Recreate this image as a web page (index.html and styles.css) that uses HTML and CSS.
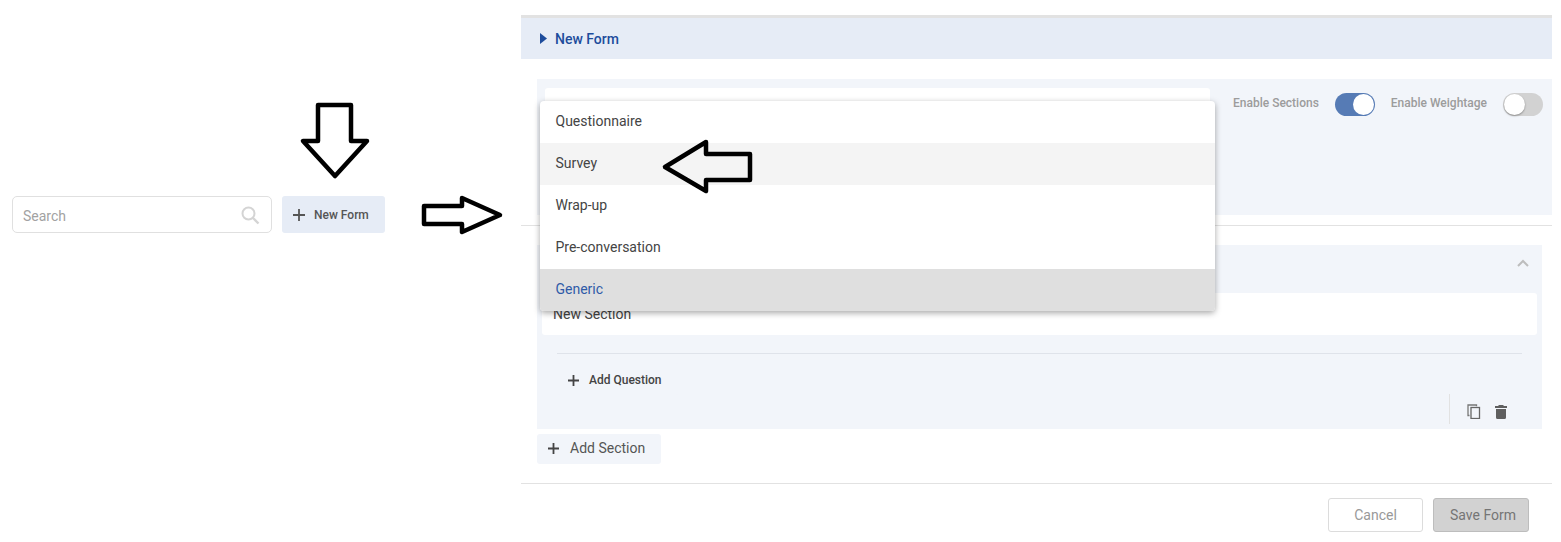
FILE: index.html
```html
<!DOCTYPE html>
<html lang="en">
<head>
<meta charset="utf-8">
<title>New Form</title>
<link rel="stylesheet" href="styles.css">
</head>
<body>
<div class="page">
  <aside class="left">
    <div class="search-row">
      <div class="search">
        <span>Search</span>
        <svg class="search-icon" viewBox="0 0 20 20" width="20" height="20"><circle cx="8.5" cy="8.5" r="6" fill="none" stroke="#d4d4d4" stroke-width="2"/><path d="M13 13l5.5 5.5" stroke="#d4d4d4" stroke-width="2.4"/></svg>
      </div>
      <button class="new-btn"><svg class="plus" viewBox="0 0 12 12" width="12" height="12"><path d="M6 0v12M0 6h12" stroke="#555" stroke-width="1.8"/></svg>New Form</button>
    </div>
  </aside>
  <main class="right">
    <header class="head"><svg viewBox="0 0 7 11" width="7" height="11"><path d="M0 0l7 5.500-7 5.500z" fill="#1d4c9c"/></svg>New Form</header>
    <section class="top-block">
      <div class="title-input"></div>
      <div class="toggle-label first">Enable Sections</div>
      <div class="toggle on"><i></i></div>
      <div class="toggle-label">Enable Weightage</div>
      <div class="toggle off"><i></i></div>
    </section>
    <hr class="rule rule-a">
    <section class="sec">
      <div class="sec-head"><svg viewBox="0 0 12 8" width="12" height="8"><path d="M1 7l5-5 5 5" fill="none" stroke="#bdbdbd" stroke-width="2"/></svg></div>
      <div class="sec-input">New Section</div>
      <div class="sec-divider"></div>
      <div class="sec-add"><button class="add-q"><svg viewBox="0 0 11 11" width="11" height="11"><path d="M5.500 0v11M0 5.500h11" stroke="#444" stroke-width="1.800"/></svg>Add Question</button></div>
      <div class="sec-foot">
        <div class="foot-icons">
          <svg viewBox="0 0 14 15" width="14" height="15"><path d="M2.500 11.500H1V1h8.500v1.200" fill="none" stroke="#777" stroke-width="1.300"/><rect x="4" y="3.500" width="8.500" height="11" fill="none" stroke="#666" stroke-width="1.300"/></svg>
          <svg viewBox="0 0 12 14" width="12" height="14"><path d="M4 0h4l1 1h3v2H0V1h3zM1 4h10v8.500A1.500 1.500 0 0 1 9.500 14h-7A1.500 1.500 0 0 1 1 12.500z" fill="#5f5f5f"/></svg>
        </div>
      </div>
    </section>
    <button class="add-s"><svg viewBox="0 0 11 11" width="11" height="11"><path d="M5.500 0v11M0 5.500h11" stroke="#444" stroke-width="1.800"/></svg>Add Section</button>
    <hr class="rule rule-b">
    <footer class="foot">
      <button class="cancel">Cancel</button>
      <button class="save">Save Form</button>
    </footer>
  </main>
  <ul class="menu">
    <li>Questionnaire</li>
    <li class="hover">Survey</li>
    <li>Wrap-up</li>
    <li>Pre-conversation</li>
    <li class="selected">Generic</li>
  </ul>
  <svg class="arrows" viewBox="0 0 1561 542" width="1561" height="542">
    <g fill="none" stroke="#000" stroke-width="4.500" stroke-linejoin="round">
      <path d="M318 105H351V141H367L335 176 303 141H318Z"/>
      <path d="M424 206H462V198L500 215 462 232V224H424Z"/>
      <path d="M750 154H706V142L665 167 706 191V180H750Z"/>
    </g>
  </svg>
</div>
</body>
</html>
```
FILE: styles.css
```css
* { box-sizing: border-box; }
html, body { margin: 0; padding: 0; background: #fff; }
body { font-family: Roboto, "Liberation Sans", sans-serif; color: #444; overflow: hidden; }
button { font-family: inherit; border: 0; padding: 0; }
.page { position: relative; width: 1561px; height: 542px; display: flex; }

.left { width: 521px; padding: 196px 0 0 12px; }
.search-row { display: flex; gap: 10px; }
.search { width: 260px; height: 37px; border: 1px solid #e0e0e0; border-radius: 5px; display: flex; align-items: center; justify-content: space-between; padding: 3px 11px 0 10px; font-size: 14px; color: #a2a2a2; }
.search-icon { margin-top: -3px; }
.new-btn { width: 103px; height: 37px; background: #e6ecf6; border-radius: 3px; display: flex; align-items: center; padding: 1px 0 0 11px; gap: 9px; font-size: 12px; font-weight: 500; color: #555; }

.right { width: 1031px; padding-top: 15px; display: flex; flex-direction: column; }
.head { height: 44px; background: #e6ecf6; border-top: 3px solid #e2e2e2; display: flex; align-items: center; gap: 8px; padding: 0 0 0 19px; font-size: 14px; font-weight: 500; color: #1d4c9c; }
.top-block { margin: 20px 0 0 16px; height: 136px; background: #f2f5fa; display: flex; align-items: flex-start; padding: 9px 9px 0 8px; }
.title-input { width: 665px; height: 40px; background: #fff; border-radius: 3px; }
.toggle-label { font-size: 12px; font-weight: 500; color: #9c9c9c; margin: 8px 16px 0 16px; }
.toggle-label.first { margin-left: 23px; }
.toggle { width: 40px; height: 23px; margin-top: 5px; border-radius: 12px; position: relative; flex: none; }
.toggle i { position: absolute; top: 1px; width: 21px; height: 21px; border-radius: 50%; background: #fff; }
.toggle.on { background: #567bb5; }
.toggle.on i { right: 1px; }
.toggle.off { background: #d2d2d2; }
.toggle.off i { left: 1px; box-shadow: 0 1px 2px rgba(0,0,0,.35); }

.rule { margin: 0; border: 0; border-top: 1px solid #e2e2e2; height: 1px; }
.rule-a { margin-top: 10px; }
.rule-b { margin-top: 19px; }

.sec { margin: 19px 10px 0 16px; height: 184px; background: #f2f5fa; display: flex; flex-direction: column; padding: 0 5px; }
.sec-head { height: 48px; flex: none; display: flex; justify-content: flex-end; padding: 14px 8px 0 0; }
.sec-input { height: 42px; flex: none; background: #fff; border-radius: 3px; font-size: 14px; color: #444; padding: 13px 0 0 11px; }
.sec-divider { margin: 18px 15px 0; border-top: 1px solid #dfe3ea; flex: none; }
.sec-add { margin: 9px 0 0 15px; flex: none; }
.add-q { width: 122px; height: 32px; background: #f2f5fa; display: flex; align-items: center; gap: 10px; padding: 2px 0 0 11px; font-size: 12px; font-weight: 500; color: #444; border-radius: 3px; }
.sec-foot { display: flex; justify-content: flex-end; margin-top: -1px; flex: none; }
.foot-icons { width: 88px; height: 30px; border-left: 1px solid #e2e2e2; display: flex; align-items: center; gap: 14px; padding: 5px 0 0 17px; }

.add-s { margin: 5px 0 0 16px; width: 124px; height: 30px; background: #f2f5fa; border-radius: 3px; display: flex; align-items: center; gap: 11px; padding: 0 0 2px 11px; font-size: 14px; color: #555; }
.foot { display: flex; justify-content: flex-end; gap: 10px; padding: 14px 23px 0 0; }
.foot button { width: 96px; height: 34px; border-radius: 3px; font-size: 14px; }
.foot .cancel { width: 95px; background: #fff; border: 1px solid #dcdcdc; color: #999; }
.foot .save { background: #d2d2d2; border: 1px solid #bdbdbd; color: #757575; padding-left: 4px; }

.menu { position: absolute; left: 540px; top: 101px; width: 675px; margin: 0; padding: 0; list-style: none; background: #fff; border-radius: 4px; box-shadow: 0 2px 6px rgba(0,0,0,.35); overflow: hidden; }
.menu li { height: 42px; line-height: 40px; padding-left: 15.500px; font-size: 14px; color: #444; }
.menu li.hover { background: #f4f4f4; }
.menu li.selected { background: #dfdfdf; color: #2f5ba8; }

.arrows { position: absolute; left: 0; top: 0; pointer-events: none; }
```
